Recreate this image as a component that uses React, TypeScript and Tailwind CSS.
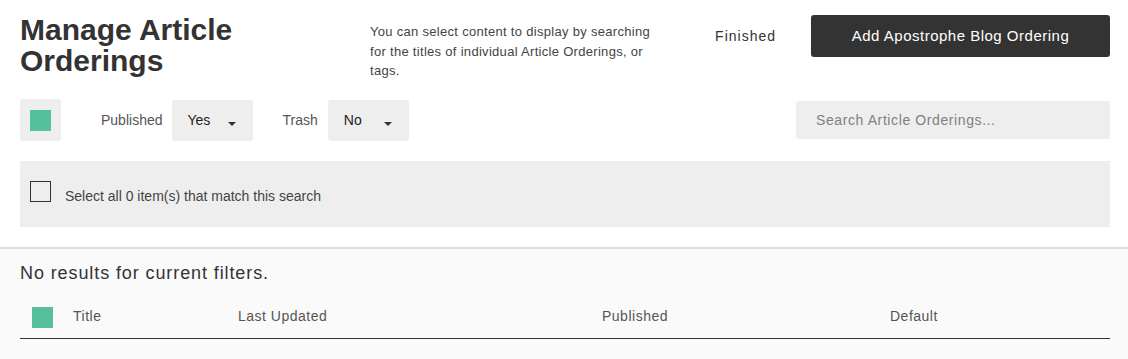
import React from "react";

const Caret = () => (
  <span className="mt-[7px] w-0 h-0 border-l-[4px] border-r-[4px] border-t-[4px] border-l-transparent border-r-transparent border-t-[#333]" />
);

const FilterSelect = ({ value }: { value: string }) => (
  <div className="w-[81px] h-[41px] bg-[#eee] rounded-[3px] flex items-center justify-between pl-4 pr-[17px] text-[14px] text-[#222]">
    <span>{value}</span>
    <Caret />
  </div>
);

const App = () => {
  return (
    <div className="w-[1128px] h-[359px] bg-white overflow-hidden font-['Liberation_Sans',Arial,sans-serif]">
      <div className="pl-5 pr-[18px]">
        {/* header */}
        <div className="h-[99px] pt-[14px] flex items-start">
          <h1 className="w-[350px] text-[30px] font-bold leading-[31px] text-[#333]">
            Manage Article
            <br />
            Orderings
          </h1>
          <p className="w-[290px] mt-[8px] text-[13px] leading-[19.5px] tracking-[0.3px] text-[#444]">
            You can select content to display by searching for the titles of
            individual Article Orderings, or tags.
          </p>
          <div className="ml-auto mt-[1px] flex items-center">
            <span className="mr-[35px] text-[14px] tracking-[1px] text-[#333]">
              Finished
            </span>
            <button className="w-[299px] h-[42px] bg-[#333] rounded-[3px] text-white text-[15px] tracking-[0.5px]">
              Add Apostrophe Blog Ordering
            </button>
          </div>
        </div>

        {/* filters */}
        <div className="h-[42px] flex items-center">
          <div className="w-[41px] h-[42px] bg-[#eee] rounded-[3px] flex items-center justify-center">
            <div className="w-[21px] h-[21px] bg-[#56bf9c]" />
          </div>
          <span className="ml-10 mr-[9px] text-[14px] text-[#555]">Published</span>
          <FilterSelect value="Yes" />
          <span className="ml-[30px] mr-[10px] text-[14px] text-[#555]">Trash</span>
          <FilterSelect value="No" />
          <div className="ml-auto w-[314px] h-[38px] bg-[#eee] rounded-[3px] flex items-center pl-5 text-[14px] tracking-[0.6px] text-[#808080]">
            Search Article Orderings...
          </div>
        </div>

        {/* select all */}
        <div className="mt-5 h-[66px] bg-[#eee] flex items-start pt-5 pl-[10px]">
          <div className="w-[21px] h-[21px] border border-[#333]" />
          <span className="ml-[14px] mt-[5px] leading-[20px] text-[14px] text-[#444]">
            Select all 0 item(s) that match this search
          </span>
        </div>
      </div>

      {/* results */}
      <div className="mt-5 h-[112px] bg-[#fafafa] border-t-2 border-[#ddd] pl-5 pr-[18px] pt-3">
        <p className="text-[18px] leading-[24px] tracking-[0.9px] text-[#333]">
          No results for current filters.
        </p>
        <div className="mt-[22px] pl-3 pb-[10px] flex items-start border-b border-[#333]">
          <div className="w-[21px] h-[21px] bg-[#56bf9c]" />
          <div className="flex ml-5 -mt-px leading-[20px] text-[14px] tracking-[0.5px] text-[#555]">
            <span className="w-[165px]">Title</span>
            <span className="w-[364px]">Last Updated</span>
            <span className="w-[288px]">Published</span>
            <span>Default</span>
          </div>
        </div>
      </div>
    </div>
  );
};

export default App;
